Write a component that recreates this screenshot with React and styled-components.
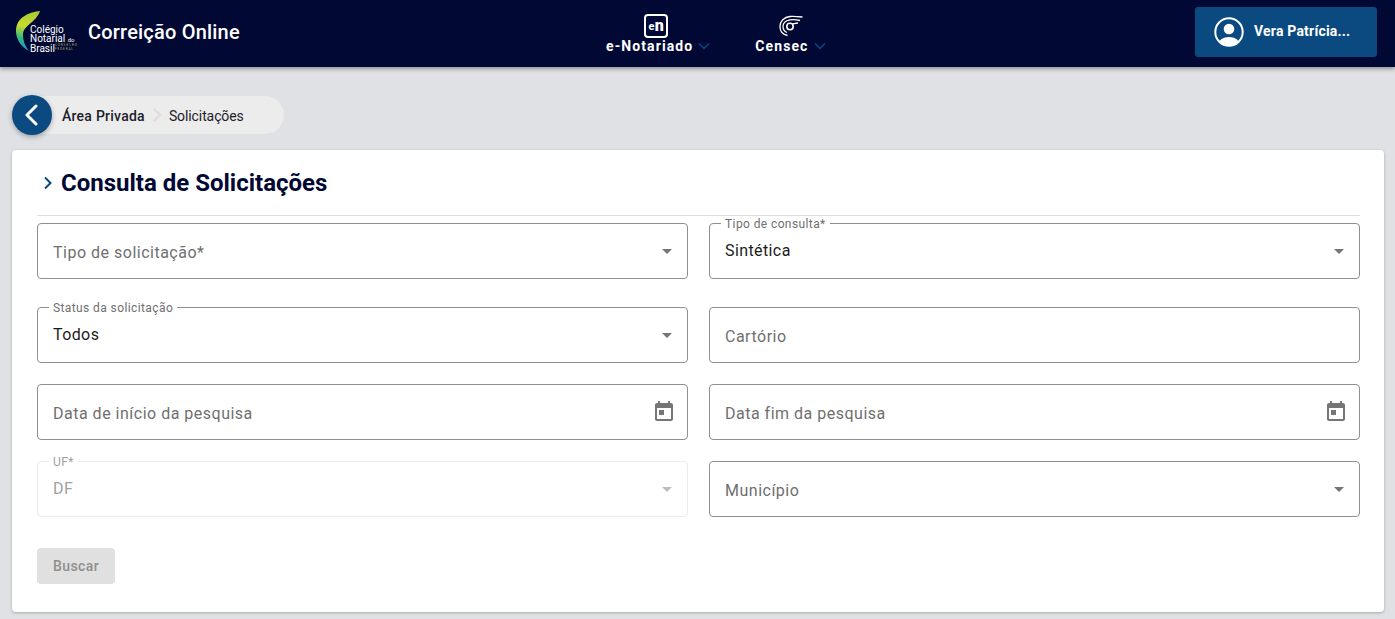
import styled, { createGlobalStyle } from "styled-components";

const GlobalStyle = createGlobalStyle`
  * {
    box-sizing: border-box;
  }

  body {
    margin: 0;
    background-color: #e0e1e5;
    font-family: Roboto, "Liberation Sans", sans-serif;
  }
`;

function Logo() {
  return (
    <LogoBox>
      <svg width="26" height="42" viewBox="0 0 26 42">
        <defs>
          <linearGradient id="swoosh" x1="0.6" y1="0" x2="0.5" y2="1">
            <stop offset="0" stopColor="#a9c73a" />
            <stop offset="0.4" stopColor="#c9dc2c" />
            <stop offset="0.7" stopColor="#35b87f" />
            <stop offset="1" stopColor="#149fca" />
          </linearGradient>
        </defs>
        <path d="M24 0C14 1 0 6 0 20c0 8 5 16 13 20-4-5-6-10-6-16C7 14 20 12 24 0z" fill="url(#swoosh)" />
      </svg>
      <LogoText>
        <span>Colégio</span>
        <span>
          Notarial <small>do</small>
        </span>
        <span>Brasil</span>
      </LogoText>
      <LogoCaption>
        <span>CONSELHO</span>
        <span>FEDERAL</span>
      </LogoCaption>
    </LogoBox>
  );
}

function Chevron() {
  return (
    <svg width="14" height="14" viewBox="0 0 14 14" fill="none">
      <path d="M2 4.5l5 5 5-5" stroke="#0a4a80" strokeWidth="1.5" />
    </svg>
  );
}

function CensecIcon() {
  return (
    <svg width="24" height="23" viewBox="0 0 24 21" fill="none" stroke="#fff" strokeWidth="1.3">
      <path d="M23.5 1C18 .5 14 .3 11 .5 5 1 1 5.5 1 10.5 1 15 4 18.5 8.500 19.5" />
      <path d="M21 4.5C17 3.5 14 3.3 11 3.8 7 4.5 4 7 4 10.5c0 2.500 1.500 5 4 6" />
      <circle cx="11" cy="10.5" r="3.2" strokeWidth="1.6" />
      <path d="M13.5 7.8L19 7" />
    </svg>
  );
}

function UserIcon() {
  return (
    <svg width="30" height="30" viewBox="0 0 30 30">
      <defs>
        <clipPath id="userRing">
          <circle cx="15" cy="15" r="13.5" />
        </clipPath>
      </defs>
      <circle cx="15" cy="15" r="13.7" fill="none" stroke="#fff" strokeWidth="2" />
      <circle cx="15" cy="12" r="5.3" fill="#fff" />
      <ellipse cx="15" cy="27" rx="10.5" ry="7" fill="#fff" clipPath="url(#userRing)" />
    </svg>
  );
}

function TodayIcon() {
  return (
    <svg width="24" height="24" viewBox="0 0 24 24" fill="#757575">
      <path d="M19 3h-1V1h-2v2H8V1H6v2H5c-1.11 0-1.99.9-1.99 2L3 19c0 1.1.89 2 2 2h14c1.1 0 2-.9 2-2V5c0-1.1-.9-2-2-2zm0 16H5V8h14v11zM7 10h5v5H7z" />
    </svg>
  );
}

function Field({ label, floating, value, arrow, calendar, disabled }) {
  return (
    <FieldBox $disabled={disabled}>
      {floating && <FloatingLabel $disabled={disabled}>{floating}</FloatingLabel>}
      {value ? (
        <FieldValue $disabled={disabled}>{value}</FieldValue>
      ) : (
        <FieldPlaceholder>{label}</FieldPlaceholder>
      )}
      {arrow && <Arrow $disabled={disabled} />}
      {calendar && <TodayIcon />}
    </FieldBox>
  );
}

export default function App() {
  return (
    <>
      <GlobalStyle />
      <Header>
        <Brand>
          <Logo />
          <BrandName>Correição Online</BrandName>
        </Brand>
        <Nav>
          <NavItem>
            <EnIcon>
              <small>e</small>n
            </EnIcon>
            <NavLabel>
              e-Notariado <Chevron />
            </NavLabel>
          </NavItem>
          <NavItem>
            <CensecIcon />
            <NavLabel>
              Censec <Chevron />
            </NavLabel>
          </NavItem>
        </Nav>
        <UserButton>
          <UserIcon />
          <UserName>Vera Patrícia...</UserName>
        </UserButton>
      </Header>

      <Main>
        <Breadcrumb>
          <BackButton>
            <svg width="18" height="22" viewBox="0 0 18 22" fill="none">
              <path d="M13 2L4 11l9 9" stroke="#fff" strokeWidth="3" strokeLinecap="round" strokeLinejoin="round" />
            </svg>
          </BackButton>
          <Crumb $strong>Área Privada</Crumb>
          <svg width="10" height="14" viewBox="0 0 10 14" fill="none">
            <path d="M2 1l6 6-6 6" stroke="#dcdcdc" strokeWidth="2" />
          </svg>
          <Crumb>Solicitações</Crumb>
        </Breadcrumb>

        <Card>
          <TitleRow>
            <svg width="10" height="14" viewBox="0 0 10 14" fill="none">
              <path d="M2 1.5L7.5 7 2 12.5" stroke="#0a4a80" strokeWidth="2" />
            </svg>
            <Title>Consulta de Solicitações</Title>
          </TitleRow>
          <Form>
            <Field label="Tipo de solicitação*" arrow />
            <Field floating="Tipo de consulta*" value="Sintética" arrow />
            <Field floating="Status da solicitação" value="Todos" arrow />
            <Field label="Cartório" />
            <Field label="Data de início da pesquisa" calendar />
            <Field label="Data fim da pesquisa" calendar />
            <Field floating="UF*" value="DF" arrow disabled />
            <Field label="Município" arrow />
          </Form>
          <SearchButton disabled>Buscar</SearchButton>
        </Card>
      </Main>
    </>
  );
}

const Header = styled.header`
  height: 67px;
  background-color: #000833;
  display: flex;
  align-items: center;
  padding: 0 18px 3px 16px;
  box-shadow: 0 2px 4px rgba(0, 0, 0, 0.35);
`;

const Brand = styled.div`
  width: 590px;
  display: flex;
  align-items: center;
  gap: 8px;
`;

const LogoBox = styled.div`
  position: relative;
  width: 64px;
  height: 42px;
`;

const LogoText = styled.div`
  position: absolute;
  left: 14px;
  top: 14px;
  display: flex;
  flex-direction: column;
  color: #fff;
  font-size: 10px;
  line-height: 9px;
  white-space: nowrap;

  small {
    font-size: 6px;
  }
`;

const LogoCaption = styled.div`
  position: absolute;
  left: 39px;
  top: 33px;
  display: flex;
  flex-direction: column;
  color: #b9b96a;
  font-size: 3px;
  line-height: 3.5px;
  letter-spacing: 0.9px;
`;

const BrandName = styled.div`
  color: #fff;
  font-size: 20px;
  font-weight: 500;
  letter-spacing: 0.2px;
`;

const Nav = styled.nav`
  display: flex;
  gap: 44px;
`;

const NavItem = styled.div`
  display: flex;
  flex-direction: column;
  align-items: center;
  height: 44px;
  justify-content: flex-end;
`;

const NavLabel = styled.div`
  display: flex;
  align-items: center;
  gap: 4px;
  color: #fff;
  font-size: 14px;
  font-weight: 700;
  letter-spacing: 1.1px;
`;

const EnIcon = styled.div`
  width: 24px;
  height: 24px;
  margin-right: 5px;
  border: 2px solid #fff;
  border-radius: 4px;
  display: flex;
  align-items: center;
  justify-content: center;
  color: #fff;
  font-size: 16px;
  font-weight: 900;
  line-height: 1;

  small {
    font-size: 11px;
    font-weight: 700;
    margin-right: 0.5px;
  }
`;

const UserButton = styled.button`
  margin-left: auto;
  width: 182px;
  height: 50px;
  border: 0;
  border-radius: 3px;
  background-color: #0a4a80;
  color: #fff;
  display: flex;
  align-items: center;
  gap: 10px;
  padding: 0 19px;
  font-family: inherit;
  font-size: 14px;
  font-weight: 700;
  letter-spacing: 0.2px;
`;

const UserName = styled.span`
  margin-bottom: 2px;
`;

const Main = styled.main`
  padding: 29px 11px 7px 12px;
`;

const Breadcrumb = styled.div`
  width: 272px;
  height: 38px;
  margin-bottom: 16px;
  border-radius: 19px;
  background-color: #ececec;
  display: flex;
  align-items: center;
  gap: 7px;
`;

const BackButton = styled.div`
  width: 40px;
  height: 40px;
  margin-right: 3px;
  border-radius: 50%;
  background-color: #0a4a80;
  box-shadow: 0 2px 5px rgba(0, 0, 0, 0.3);
  display: flex;
  align-items: center;
  justify-content: center;
`;

const Crumb = styled.span`
  margin-top: 2px;
  color: #1c1c2b;
  font-size: 14px;
  font-weight: ${(props) => (props.$strong ? 500 : 400)};
  letter-spacing: ${(props) => (props.$strong ? "0.25px" : "-0.1px")};
`;

const Card = styled.section`
  height: 462px;
  padding: 0 24px 0 25px;
  background-color: #fff;
  border-radius: 4px;
  box-shadow: 0 1px 3px rgba(0, 0, 0, 0.25);
`;

const TitleRow = styled.div`
  height: 66px;
  display: flex;
  align-items: center;
  gap: 8px;
  padding-left: 6px;
  border-bottom: 1px solid #dfdfdf;
`;

const Title = styled.h1`
  margin: 0;
  color: #000833;
  font-size: 24px;
  font-weight: 700;
`;

const Form = styled.div`
  margin-top: 7px;
  display: grid;
  grid-template-columns: 1fr 1fr;
  column-gap: 21px;
  row-gap: 21px;

  & > :nth-child(3),
  & > :nth-child(4) {
    margin-top: 7px;
  }
`;

const FieldBox = styled.div`
  position: relative;
  height: 56px;
  display: flex;
  align-items: center;
  justify-content: space-between;
  padding: 0 11px 0 15px;
  border: 1px solid ${(props) => (props.$disabled ? "#ececec" : "#8f8f8f")};
  border-radius: 4px;
  background-color: #fff;
`;

const FloatingLabel = styled.label`
  position: absolute;
  top: -7px;
  left: 11px;
  padding: 0 4px;
  background-color: #fff;
  color: ${(props) => (props.$disabled ? "#a0a0a0" : "#6f6f6f")};
  font-size: 12px;
  line-height: 14px;
  letter-spacing: 0.4px;
`;

const FieldValue = styled.span`
  margin-top: -2px;
  color: ${(props) => (props.$disabled ? "#a0a0a0" : "#1c1c1c")};
  font-size: 16px;
  letter-spacing: 0.4px;
`;

const FieldPlaceholder = styled.span`
  margin-top: 3px;
  color: #6f6f6f;
  font-size: 16px;
  letter-spacing: 0.5px;
`;

const Arrow = styled.span`
  width: 0;
  height: 0;
  margin-right: 4px;
  border-left: 5px solid transparent;
  border-right: 5px solid transparent;
  border-top: 5px solid ${(props) => (props.$disabled ? "#bdbdbd" : "#757575")};
`;

const SearchButton = styled.button`
  display: block;
  width: 78px;
  height: 36px;
  margin-top: 31px;
  border: 0;
  border-radius: 4px;
  background-color: #e0e0e0;
  color: #8e8e8e;
  font-family: inherit;
  font-size: 14px;
  font-weight: 500;
  letter-spacing: 0.4px;
`;
